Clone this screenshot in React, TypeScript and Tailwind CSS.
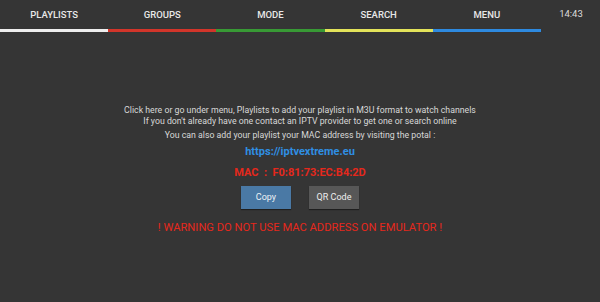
import React from 'react';

const tabs = [
  { label: 'PLAYLISTS', bar: 'bg-[#eeeeee]' },
  { label: 'GROUPS', bar: 'bg-[#d2352a]' },
  { label: 'MODE', bar: 'bg-[#389a35]' },
  { label: 'SEARCH', bar: 'bg-[#e3e35a]' },
  { label: 'MENU', bar: 'bg-[#2e8ae0]' },
];

export default function App() {
  return (
    <div className="w-[600px] h-[302px] bg-[#353535] flex flex-col font-['Roboto',sans-serif] overflow-hidden">
      {/* Top tabs */}
      <div className="flex h-[32px]">
        {tabs.map((t) => (
          <div key={t.label} className="w-[108.2px] flex flex-col">
            <div className="flex-1 flex items-center justify-center pt-[1px] text-[9.5px] font-medium text-[#e8e8e8]">
              {t.label}
            </div>
            <div className={`h-[3px] ${t.bar}`} />
          </div>
        ))}
        <div className="flex-1 flex items-center justify-center pb-[3px] pl-[1px] text-[9.5px] text-[#dcdcdc]">
          14:43
        </div>
      </div>

      {/* Body */}
      <div className="flex flex-col items-center pt-[73px] text-center">
        <p className="text-[8.75px] leading-[11px] text-[#d8d8d8]">
          Click here or go under menu, Playlists to add your playlist in M3U format to watch channels
        </p>
        <p className="text-[8.75px] leading-[11px] text-[#d8d8d8]">
          If you don&apos;t already have one contact an IPTV provider to get one or search online
        </p>
        <p className="mt-[3px] text-[8.75px] leading-[11px] text-[#d8d8d8]">
          You can also add your playlist your MAC address by visiting the potal :
        </p>
        <p className="mt-[4px] text-[11px] leading-[13px] font-bold text-[#2f8fe3]">https://iptvextreme.eu</p>
        <p className="mt-[8px] text-[11px] leading-[13px] font-bold text-[#e5281c] whitespace-pre">
          MAC  :  F0:81:73:EC:B4:2D
        </p>
        <div className="mt-[7px] flex gap-[18px]">
          <button className="w-[50px] h-[23px] bg-[#4a79a5] text-[9px] text-[#eef2f6] shadow-[0_1px_1px_rgba(0,0,0,0.4)]">
            Copy
          </button>
          <button className="w-[50px] h-[23px] bg-[#575757] text-[9px] text-[#eeeeee] shadow-[0_1px_1px_rgba(0,0,0,0.4)]">
            QR Code
          </button>
        </div>
        <p className="mt-[12px] text-[11.2px] leading-[13px] text-[#e5281c]">
          ! WARNING DO NOT USE MAC ADDRESS ON EMULATOR !
        </p>
      </div>
    </div>
  );
}
